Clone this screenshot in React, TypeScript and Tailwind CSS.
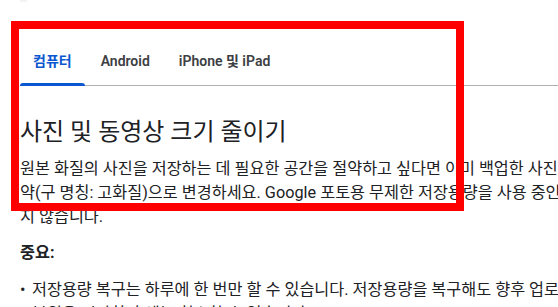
import { useState } from 'react';

const tabs = ['컴퓨터', 'Android', 'iPhone 및 iPad'];

export default function App() {
  const [active, setActive] = useState(0);

  return (
    <div
      className="relative w-[558px] h-[307px] overflow-hidden bg-white text-[#202124]"
      style={{ fontFamily: 'Roboto, "Noto Sans CJK KR", "Noto Sans", sans-serif' }}
    >
      <div className="ml-5 w-[7px] h-[2px] bg-[#f1f3f4]" />

      <div className="pt-[36px] pl-5">
        <div className="flex gap-[3px] border-b border-[#b0b0b0] h-[48px] w-[760px]">
          {tabs.map((t, i) => (
            <button
              key={t}
              onClick={() => setActive(i)}
              className={`relative px-[13px] text-[14px] font-semibold ${
                i === active ? 'text-[#0b57d0]' : 'text-[#3c4043]'
              }`}
            >
              {t}
              {i === active && (
                <span className="absolute left-0 right-0 -bottom-px h-[3px] rounded-t-[3px] bg-[#0b57d0]" />
              )}
            </button>
          ))}
        </div>

        <h1 className="mt-[31px] text-[24px] leading-[30px] font-normal">
          사진 및 동영상 크기 줄이기
        </h1>

        <p className="mt-[10px] w-[800px] text-[16.25px] leading-[24px]">
          원본 화질의 사진을 저장하는 데 필요한 공간을 절약하고 싶다면 이미 백업한 사진과 동영상을 저장용량 절
          <br />
          약(구 명칭: 고화질)으로 변경하세요. Google 포토용 무제한 저장용량을 사용 중인 경우에는 적용되
          <br />
          지 않습니다.
        </p>

        <p className="mt-[12px] text-[16.25px] leading-[24px] font-bold">중요:</p>

        <ul className="mt-[13px] w-[800px] text-[16.25px] leading-[24px]">
          <li className="flex gap-[7px]">
            <span className="w-[5px]">•</span>
            <span>저장용량 복구는 하루에 한 번만 할 수 있습니다. 저장용량을 복구해도 향후 업로드되는 항목에는 영향을 주지 않습니다.</span>
          </li>
          <li className="flex gap-[7px]">
            <span className="w-[5px]">•</span>
            <span>복원을 시작한 후에는 취소할 수 없습니다.</span>
          </li>
        </ul>
      </div>

      <div className="absolute left-[11px] top-[21px] w-[453px] h-[190px] border-8 border-[#ff0000] pointer-events-none" />
    </div>
  );
}
